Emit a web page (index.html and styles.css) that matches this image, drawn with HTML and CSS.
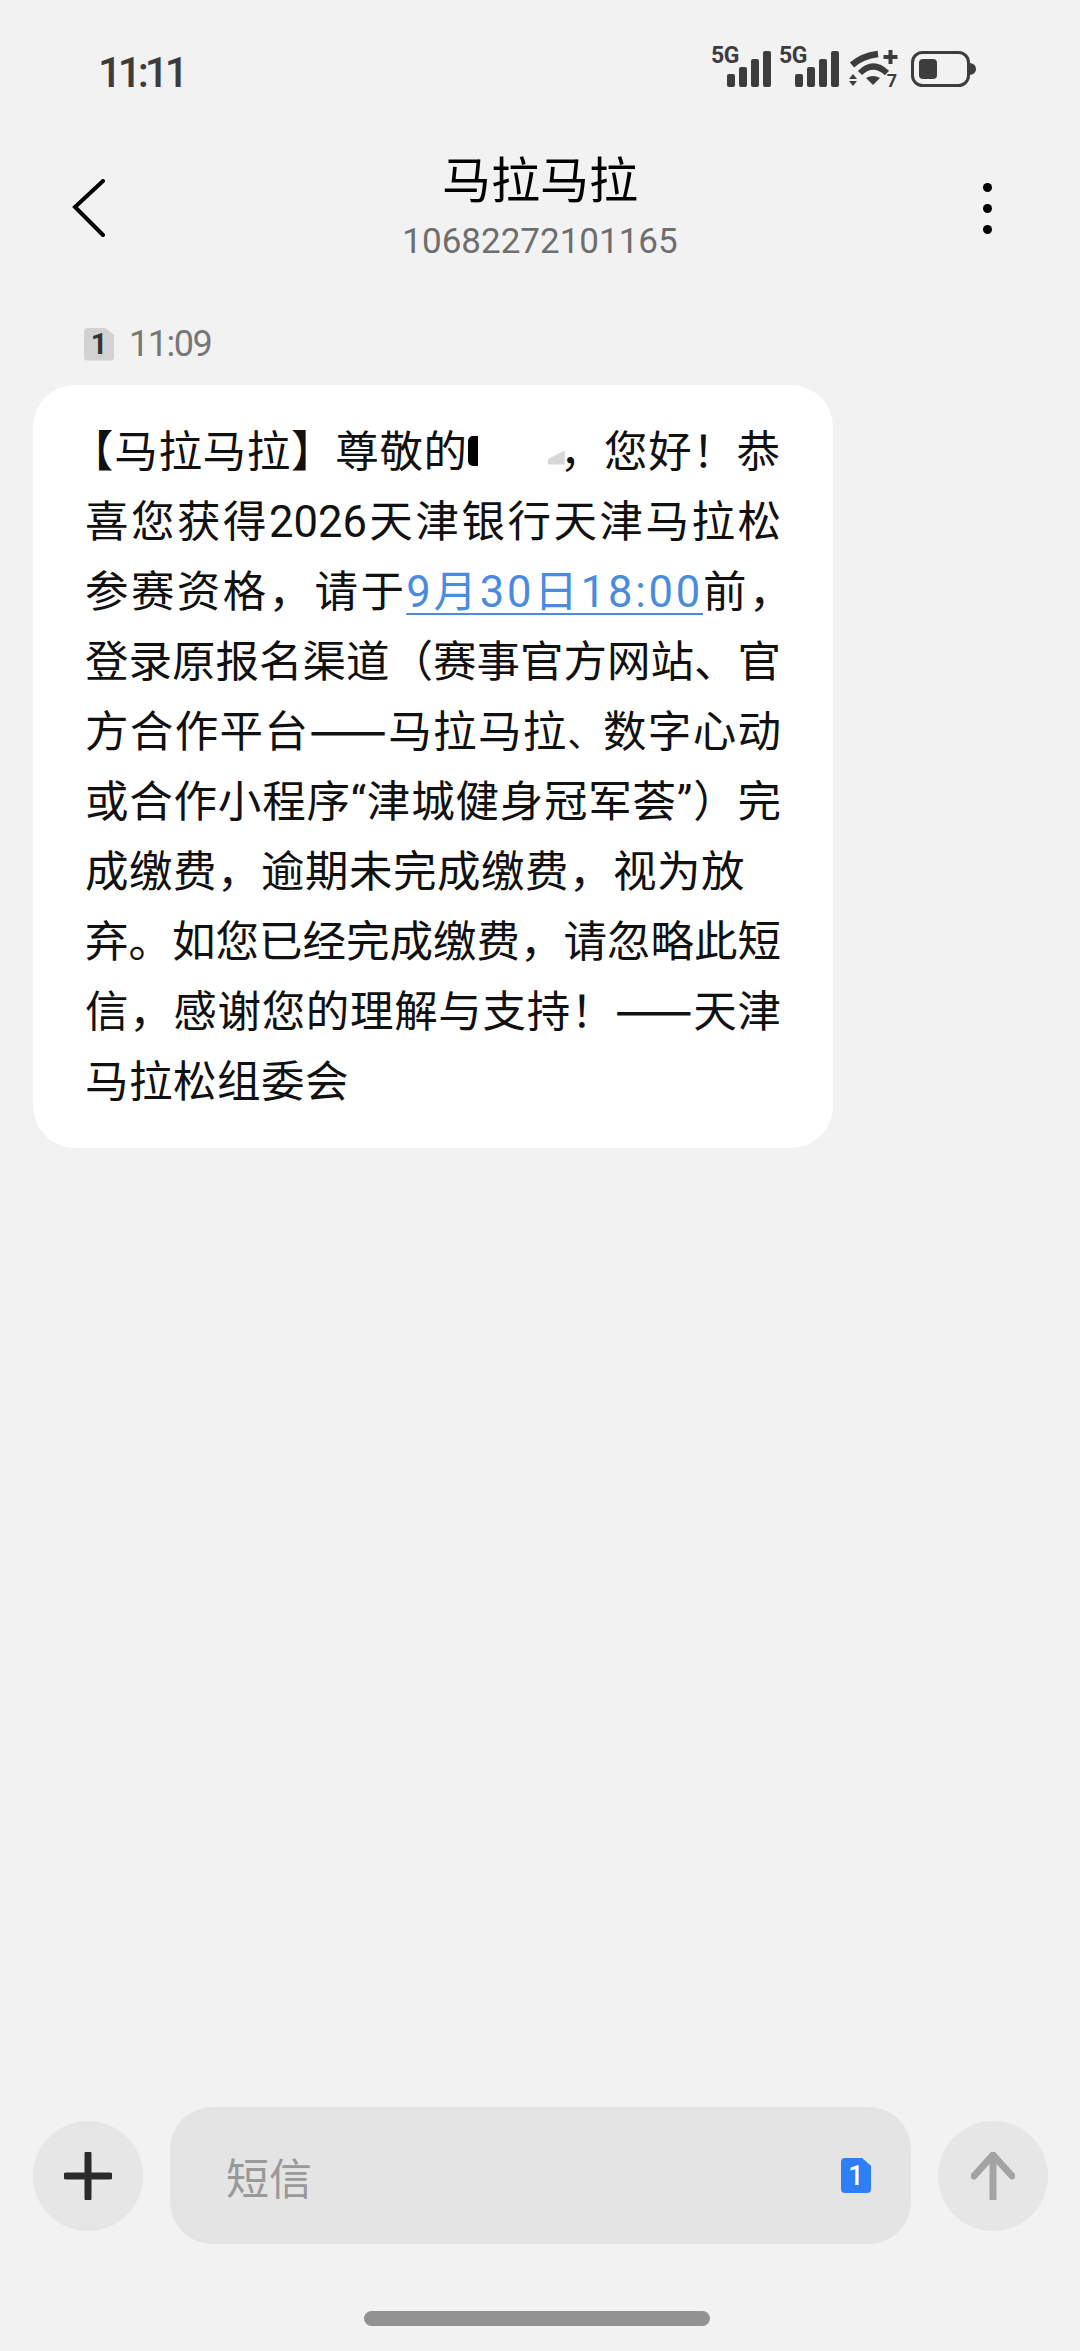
FILE: index.html
```html
<!DOCTYPE html>
<html>

<head>
    <title>马拉马拉</title>
    <meta charset="utf-8">
    <link rel="stylesheet" href="styles.css">
</head>

<body>
    <div class="page">
        <div class="status-bar">
            <span class="clock">11:11</span>
            <div class="status-icons">
                <div class="signal">
                    <span class="net">5G</span>
                    <svg width="44" height="36" viewBox="0 0 44 36">
                        <rect x="0" y="23" width="8" height="13" rx="2"/>
                        <rect x="12" y="16" width="8" height="20" rx="2"/>
                        <rect x="24" y="8" width="8" height="28" rx="2"/>
                        <rect x="36" y="0" width="8" height="36" rx="2"/>
                    </svg>
                </div>
                <div class="signal">
                    <span class="net">5G</span>
                    <svg width="44" height="36" viewBox="0 0 44 36">
                        <rect x="0" y="23" width="8" height="13" rx="2"/>
                        <rect x="12" y="16" width="8" height="20" rx="2"/>
                        <rect x="24" y="8" width="8" height="28" rx="2"/>
                        <rect x="36" y="0" width="8" height="36" rx="2"/>
                    </svg>
                </div>
                <div class="wifi">
                    <svg width="50" height="37" viewBox="0 0 50 37">
                        <path d="M3 15 Q13 6 29 4" fill="none" stroke="#3d3d3d" stroke-width="6.5"/>
                        <path d="M11 23 Q24 10 38 23" fill="none" stroke="#3d3d3d" stroke-width="6"/>
                        <path d="M17 28 Q24 24 31 28 L24 35 Z"/>
                        <path d="M4 24 L8 29 H0 Z"/>
                        <path d="M0 31 H8 L4 36 Z"/>
                        <rect x="39.5" y="0" width="4" height="14"/>
                        <rect x="34.5" y="5" width="14" height="4"/>
                    </svg>
                    <span class="wifi-num">7</span>
                </div>
                <svg class="battery" width="65" height="36" viewBox="0 0 65 36">
                    <rect x="1.5" y="1.5" width="56" height="33" rx="10" fill="none" stroke="#3d3d3d" stroke-width="3"/>
                    <rect x="8" y="8" width="18" height="20" rx="4"/>
                    <path d="M59 12 Q65 13 65 18 Q65 23 59 24 Z"/>
                </svg>
            </div>
        </div>

        <div class="header">
            <svg class="back" width="34" height="58" viewBox="0 0 34 58">
                <path d="M31 2 L3 28 L31 56" fill="none" stroke="#000" stroke-width="4" stroke-linecap="round"/>
            </svg>
            <div class="contact">
                <div class="contact-name">马拉马拉</div>
                <div class="contact-num">10682272101165</div>
            </div>
            <div class="more">
                <i></i><i></i><i></i>
            </div>
        </div>

        <div class="msg-time">
            <span class="sim sim-gray">1</span>
            <span>11:09</span>
        </div>

        <div class="bubble">
            <div class="first">
                <span class="open-bracket">【</span>马拉马拉】尊敬的<span class="mask"><i class="mask-black"></i><i class="mask-gray"></i></span>，您好！恭
            </div>
            <div>喜您获得2026天津银行天津马拉松</div>
            <div class="third">参赛资格，请于<a href="#">9月30日18:00</a>前，</div>
            <div>登录原报名渠道（赛事官方网站、官</div>
            <div>方合作平台<span class="dash">——</span>马拉马拉<span class="short-mark">、</span>数字心动</div>
            <div>或合作小程序“津城健身冠军荟”）完</div>
            <div class="plain">成缴费，逾期未完成缴费，视为放</div>
            <div>弃。如您已经完成缴费，请忽略此短</div>
            <div>信，感谢您的理解与支持！<span class="dash">——</span>天津</div>
            <div class="plain">马拉松组委会</div>
        </div>

        <div class="spacer"></div>

        <div class="input-bar">
            <div class="round-btn">
                <svg width="48" height="48" viewBox="0 0 48 48">
                    <path d="M24 2 V46 M2 24 H46" stroke="#2b2b2b" stroke-width="7" stroke-linecap="round"/>
                </svg>
            </div>
            <div class="input-box">
                <span>短信</span>
                <span class="sim sim-blue">1</span>
            </div>
            <div class="round-btn">
                <svg width="44" height="48" viewBox="0 0 44 48">
                    <path d="M22 46 V4 M3 24 L22 3 L41 24" fill="none" stroke="#a3a3a3" stroke-width="7" stroke-linecap="round"/>
                </svg>
            </div>
        </div>

        <div class="home-bar"></div>
    </div>
</body>

</html>
```

FILE: styles.css
```css
* {
    box-sizing: border-box;
}

body {
    margin: 0;
    background-color: #f2f2f2;
    font-family: "Roboto", "Noto Sans CJK SC", sans-serif;
}

.page {
    display: flex;
    flex-direction: column;
    width: 1080px;
    height: 2351px;
    overflow: hidden;
}

.status-bar {
    display: flex;
    justify-content: space-between;
    align-items: flex-end;
    height: 90px;
    padding: 0 104px 0 98px;
}

.clock {
    margin-bottom: -7px;
    font-size: 42px;
    font-weight: 500;
    line-height: 48px;
    letter-spacing: -4px;
    color: #3d3d3d;
}

.status-icons {
    display: flex;
    align-items: flex-end;
    gap: 8px;
    height: 44px;
    margin-bottom: 3px;
    fill: #3d3d3d;
}

.signal {
    position: relative;
    width: 60px;
    display: flex;
    justify-content: flex-end;
}

.net {
    position: absolute;
    left: 0;
    top: -5px;
    font-size: 23px;
    font-weight: 700;
    line-height: 20px;
    letter-spacing: -0.5px;
    color: #3d3d3d;
}

.wifi {
    position: relative;
    height: 37px;
    margin-left: 2px;
}

.wifi-num {
    position: absolute;
    right: 2px;
    bottom: -2px;
    font-size: 18px;
    font-weight: 700;
    line-height: 16px;
    color: #3d3d3d;
}

.battery {
    margin-left: 4px;
}

.header {
    display: grid;
    grid-template-columns: 1fr auto 1fr;
    align-items: center;
    height: 120px;
    margin-top: 58px;
    padding: 0 72px;
}

.contact {
    display: flex;
    flex-direction: column;
    align-items: center;
}

.contact-name {
    font-size: 49px;
    line-height: 68px;
    color: #000;
}

.contact-num {
    font-size: 35px;
    line-height: 52px;
    color: #6e6e6e;
}

.more {
    display: flex;
    flex-direction: column;
    justify-self: end;
    gap: 12px;
    padding-right: 16px;
}

.more i {
    width: 9px;
    height: 9px;
    border-radius: 50%;
    background-color: #000;
}

.msg-time {
    display: flex;
    align-items: center;
    gap: 15px;
    height: 36px;
    margin-top: 58px;
    padding-left: 84px;
    font-size: 36px;
    letter-spacing: -1.5px;
    color: #777;
}

.sim {
    display: flex;
    justify-content: center;
    align-items: center;
    font-weight: 700;
    letter-spacing: 0;
    clip-path: polygon(0 0, 70% 0, 100% 22%, 100% 100%, 0 100%);
    border-radius: 4px;
}

.sim-gray {
    width: 30px;
    height: 33px;
    font-size: 29px;
    background-color: #d2d2d2;
    color: #333;
}

.sim-blue {
    width: 30px;
    height: 35px;
    font-size: 27px;
    font-weight: 500;
    background-color: #2e7ff6;
    color: #fff;
}

.bubble {
    width: 800px;
    height: 763px;
    margin: 23px 0 0 33px;
    padding: 33px 0 0 52px;
    border-radius: 42px;
    background-color: #fff;
    font-size: 43.5px;
    line-height: 70px;
    color: #111;
}

.bubble > div {
    width: 696px;
    height: 70px;
    white-space: nowrap;
    text-align: justify;
    text-align-last: justify;
}

.bubble > .first {
    text-align-last: left;
    letter-spacing: 0.7px;
}

.bubble > .third {
    text-align-last: left;
    letter-spacing: 2.4px;
}

.bubble > .plain {
    text-align-last: left;
    letter-spacing: 0.5px;
}

.open-bracket {
    margin-left: -15px;
}

.dash {
    font-family: "Noto Sans CJK SC", sans-serif;
    font-size: 46px;
    font-weight: 500;
    line-height: 1;
}

.short-mark {
    font-size: 34px;
}

.bubble a {
    color: #4a8bdc;
    letter-spacing: 2.8px;
    text-decoration: underline;
    text-decoration-thickness: 2px;
    text-underline-offset: 6px;
}

.mask {
    position: relative;
    display: inline-block;
    width: 92px;
    height: 46px;
    vertical-align: middle;
}

.mask-black {
    position: absolute;
    left: 0;
    top: 3px;
    width: 10px;
    height: 30px;
    border-radius: 5px 0 0 5px;
    background-color: #000;
}

.mask-gray {
    position: absolute;
    left: 80px;
    top: 18px;
    width: 17px;
    height: 14px;
    background-color: #d8d8d8;
    clip-path: polygon(100% 0, 100% 100%, 0 100%, 0 60%);
}

.spacer {
    flex: 1;
}

.input-bar {
    display: flex;
    align-items: center;
    gap: 27px;
    padding: 0 32px 0 33px;
}

.round-btn {
    display: flex;
    justify-content: center;
    align-items: center;
    width: 110px;
    height: 110px;
    border-radius: 50%;
    background-color: #e6e6e6;
}

.input-box {
    display: flex;
    justify-content: space-between;
    align-items: center;
    flex: 1;
    height: 137px;
    padding: 0 40px 0 56px;
    border-radius: 42px;
    background-color: #e4e4e4;
    font-size: 43px;
    color: #999;
}

.home-bar {
    width: 346px;
    height: 15px;
    margin: 67px 0 25px 364px;
    border-radius: 8px;
    background-color: #929292;
}
```
